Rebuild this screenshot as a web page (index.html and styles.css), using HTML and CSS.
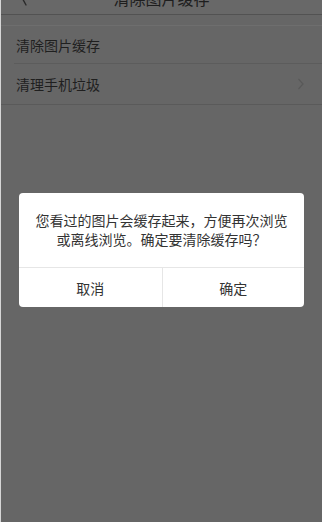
FILE: index.html
```html
<!DOCTYPE html>
<html lang="zh-CN">
<head>
<meta charset="utf-8">
<title>清除图片缓存</title>
<link rel="stylesheet" href="styles.css">
</head>
<body>
<div class="screen">
  <header class="nav">
    <div class="nav-left">
      <svg class="back" width="12" height="12" viewBox="0 0 12 12"><path d="M1 -6 L7 5" stroke="#2a2a2a" stroke-width="1.4" fill="none" stroke-linecap="round"/></svg>
    </div>
    <div class="nav-title">清除图片缓存</div>
    <div class="nav-right"></div>
  </header>
  <ul class="list">
    <li class="row">清除图片缓存</li>
    <li class="row">清理手机垃圾
      <svg class="chev" width="8" height="12" viewBox="0 0 8 12"><path d="M1.5 1 L6 6 L1.5 11" stroke="#595959" stroke-width="1.2" fill="none"/></svg>
    </li>
  </ul>
  <div class="dialog">
    <div class="msg">您看过的图片会缓存起来，方便再次浏览<br>或离线浏览。确定要清除缓存吗？</div>
    <div class="btns">
      <div class="btn">取消</div>
      <div class="btn">确定</div>
    </div>
  </div>
</div>
</body>
</html>
```
FILE: styles.css
```css
* { box-sizing: border-box; }
html, body { margin: 0; padding: 0; }
body {
  width: 322px;
  height: 522px;
  overflow: hidden;
  background: #666666;
  font-family: "Noto Sans CJK SC", "Noto Sans", sans-serif;
}
.screen {
  position: relative;
  width: 322px;
  height: 522px;
  background: #666666;
  border-left: 1px solid #d6d6d6;
  display: flex;
  flex-direction: column;
}
.nav {
  height: 15px;
  flex: none;
  display: flex;
  justify-content: space-between;
  align-items: flex-start;
  border-bottom: 1px solid #525252;
  background: #686868;
}
.nav-left { width: 60px; padding-left: 18px; height: 14px; }
.nav-right { width: 60px; }
.back { display: block; }
.nav-title {
  font-size: 16px;
  line-height: 16px;
  margin-top: -10px;
  color: #1e1e1e;
  white-space: nowrap;
}
.list {
  list-style: none;
  margin: 10px 0 0;
  padding: 0;
  border-top: 1px solid #6e6e6e;
  border-bottom: 1px solid #5a5a5a;
}
.row {
  position: relative;
  height: 40px;
  padding: 0 15px;
  display: flex;
  align-items: center;
  justify-content: space-between;
  font-size: 14px;
  color: #1f1f1f;
}
.row + .row::before {
  content: "";
  position: absolute;
  top: -1px;
  left: 13px;
  right: 0;
  border-top: 1px solid #5c5c5c;
}
.row:first-child { height: 38px; }
.chev { margin-right: 2px; }
.dialog {
  position: absolute;
  left: 18px;
  top: 193px;
  width: 285px;
  height: 114px;
  background: #ffffff;
  border-radius: 4px;
  display: flex;
  flex-direction: column;
}
.msg {
  height: 74px;
  display: flex;
  align-items: center;
  justify-content: center;
  text-align: center;
  font-size: 14px;
  line-height: 19px;
  color: #333333;
  white-space: nowrap;
}
.btns {
  flex: 1;
  display: grid;
  grid-template-columns: 1fr 1fr;
  border-top: 1px solid #e6e6e6;
}
.btn {
  display: flex;
  align-items: center;
  justify-content: center;
  font-size: 14px;
  color: #333333;
}
.btn + .btn { border-left: 1px solid #e6e6e6; }
```
